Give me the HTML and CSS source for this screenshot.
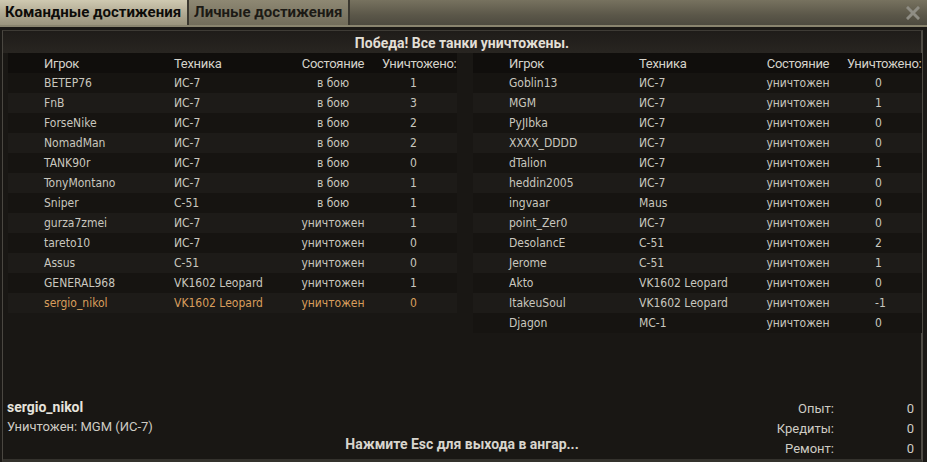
FILE: index.html
```html
<!DOCTYPE html>
<html lang="ru">
<head>
    <meta charset="UTF-8">
    <meta name="viewport" content="width=device-width, initial-scale=1.0">
    <title>Результаты боя</title>
    <link rel="stylesheet" href="styles.css">
</head>
<body>
    <div id="window">
        <div class="tabs">
            <div class="tab active">Командные достижения</div>
            <div class="tab">Личные достижения</div>
            <div class="close">
                <svg width="14" height="14" viewBox="0 0 14 14"><path d="M2 2 L12 12 M12 2 L2 12" stroke="#8f8d84" stroke-width="3" stroke-linecap="square"/></svg>
            </div>
        </div>
        <div class="panel">
            <div class="title">Победа! Все танки уничтожены.</div>
            <div class="teams">
                <div class="team">
                    <div class="row head"><span>Игрок</span><span>Техника</span><span class="st">Состояние</span><span class="kl">Уничтожено:</span></div>
                    <div class="row"><span>BETEP76</span><span>ИС-7</span><span class="st">в бою</span><span class="kl">1</span></div>
                    <div class="row"><span>FnB</span><span>ИС-7</span><span class="st">в бою</span><span class="kl">3</span></div>
                    <div class="row"><span>ForseNike</span><span>ИС-7</span><span class="st">в бою</span><span class="kl">2</span></div>
                    <div class="row"><span>NomadMan</span><span>ИС-7</span><span class="st">в бою</span><span class="kl">2</span></div>
                    <div class="row"><span>TANK90r</span><span>ИС-7</span><span class="st">в бою</span><span class="kl">0</span></div>
                    <div class="row"><span>TonyMontano</span><span>ИС-7</span><span class="st">в бою</span><span class="kl">1</span></div>
                    <div class="row"><span>Sniper</span><span>С-51</span><span class="st">в бою</span><span class="kl">1</span></div>
                    <div class="row"><span>gurza7zmei</span><span>ИС-7</span><span class="st">уничтожен</span><span class="kl">1</span></div>
                    <div class="row"><span>tareto10</span><span>ИС-7</span><span class="st">уничтожен</span><span class="kl">0</span></div>
                    <div class="row"><span>Assus</span><span>С-51</span><span class="st">уничтожен</span><span class="kl">0</span></div>
                    <div class="row"><span>GENERAL968</span><span>VK1602 Leopard</span><span class="st">уничтожен</span><span class="kl">1</span></div>
                    <div class="row me"><span>sergio_nikol</span><span>VK1602 Leopard</span><span class="st">уничтожен</span><span class="kl">0</span></div>
                </div>
                <div class="team">
                    <div class="row head"><span>Игрок</span><span>Техника</span><span class="st">Состояние</span><span class="kl">Уничтожено:</span></div>
                    <div class="row"><span>Goblin13</span><span>ИС-7</span><span class="st">уничтожен</span><span class="kl">0</span></div>
                    <div class="row"><span>MGM</span><span>ИС-7</span><span class="st">уничтожен</span><span class="kl">1</span></div>
                    <div class="row"><span>PyJIbka</span><span>ИС-7</span><span class="st">уничтожен</span><span class="kl">0</span></div>
                    <div class="row"><span>XXXX_DDDD</span><span>ИС-7</span><span class="st">уничтожен</span><span class="kl">0</span></div>
                    <div class="row"><span>dTalion</span><span>ИС-7</span><span class="st">уничтожен</span><span class="kl">1</span></div>
                    <div class="row"><span>heddin2005</span><span>ИС-7</span><span class="st">уничтожен</span><span class="kl">0</span></div>
                    <div class="row"><span>ingvaar</span><span>Maus</span><span class="st">уничтожен</span><span class="kl">0</span></div>
                    <div class="row"><span>point_Zer0</span><span>ИС-7</span><span class="st">уничтожен</span><span class="kl">0</span></div>
                    <div class="row"><span>DesolancE</span><span>С-51</span><span class="st">уничтожен</span><span class="kl">2</span></div>
                    <div class="row"><span>Jerome</span><span>С-51</span><span class="st">уничтожен</span><span class="kl">1</span></div>
                    <div class="row"><span>Akto</span><span>VK1602 Leopard</span><span class="st">уничтожен</span><span class="kl">0</span></div>
                    <div class="row"><span>ItakeuSoul</span><span>VK1602 Leopard</span><span class="st">уничтожен</span><span class="kl">-1</span></div>
                    <div class="row"><span>Djagon</span><span>МС-1</span><span class="st">уничтожен</span><span class="kl">0</span></div>
                </div>
            </div>
            <div class="footer">
                <div class="who">
                    <div class="nick">sergio_nikol</div>
                    <div class="killer">Уничтожен: MGM (ИС-7)</div>
                </div>
                <div class="esc">Нажмите Esc для выхода в ангар...</div>
                <div class="stats">
                    <span class="lbl">Опыт:</span><span class="val">0</span>
                    <span class="lbl">Кредиты:</span><span class="val">0</span>
                    <span class="lbl">Ремонт:</span><span class="val">0</span>
                </div>
            </div>
        </div>
    </div>
</body>
</html>
```

FILE: styles.css
```css
body{
    margin: 0;
    background-color: #14120f;
    overflow: hidden;
}
#window{
    width: 927px;
    height: 462px;
    display: flex;
    flex-direction: column;
    background-color: #1b1916;
}
.tabs{
    height: 25px;
    display: flex;
    align-items: stretch;
    background: linear-gradient(#77725f, #5b5749 60%, #4d4a3f);
    border-bottom: 2px solid #8a856f;
}
.tab{
    padding: 0 6px 0 5px;
    font-family: Roboto, "DejaVu Sans Condensed", sans-serif;
    font-weight: bold;
    font-size: 15px;
    line-height: 25px;
    white-space: nowrap;
    color: #1c1a15;
    background: linear-gradient(#8e8873, #726d5b);
    border-right: 2px solid #3b382f;
}
.tab.active{
    background: linear-gradient(#cfc9b1, #aea790 60%, #9b957e);
    color: #0d0c09;
}
.close{
    margin-left: auto;
    width: 24px;
    display: flex;
    align-items: center;
    justify-content: center;
    padding-right: 2px;
}
.panel{
    flex: 1;
    margin: 3px 4px 0 2px;
    border-left: 1px solid #4a4741;
    border-top: 1px solid #3e3b35;
    border-right: 2px solid #4f4c45;
    border-bottom: 3px solid #34322d;
    background-color: #191714;
    display: flex;
    flex-direction: column;
}
.title{
    height: 22px;
    line-height: 24px;
    text-align: center;
    font-family: Roboto, "DejaVu Sans Condensed", sans-serif;
    font-weight: bold;
    font-size: 14px;
    color: #e2dfd6;
    background: linear-gradient(#1f1c19, #282521);
}
.teams{
    display: grid;
    grid-template-columns: 449px 449px;
    gap: 16px;
    padding-left: 5px;
}
.row{
    height: 20px;
    display: grid;
    grid-template-columns: 130px 110px 98px 1fr;
    padding-left: 36px;
    align-items: center;
    font-family: "DejaVu Sans Condensed", "DejaVu Sans", sans-serif;
    font-size: 12px;
    color: #c9c7bf;
    background-color: #1d1b18;
}
.row:nth-child(even){
    background-color: #161411;
}
.row .st{
    text-align: center;
}
.row .kl{
    padding-left: 28px;
}
.row.head{
    font-family: Roboto, "DejaVu Sans Condensed", sans-serif;
    font-size: 13px;
    letter-spacing: -0.3px;
    color: #d4d2ca;
    background-color: #100e0c;
}
.row.head .kl{
    padding-left: 0;
    white-space: nowrap;
}
.row.me{
    color: #d99e5c;
}
.footer{
    margin-top: auto;
    height: 60px;
    display: grid;
    grid-template-columns: 1fr 1fr 1fr;
    align-items: end;
    font-family: Roboto, "DejaVu Sans Condensed", sans-serif;
    color: #cfccc4;
}
.who{
    align-self: start;
    padding-left: 4px;
    margin-top: -2px;
}
.nick{
    font-weight: bold;
    font-size: 14px;
    color: #e6e3dc;
    line-height: 20px;
}
.killer{
    font-size: 13px;
    line-height: 20px;
}
.esc{
    text-align: center;
    font-weight: bold;
    font-size: 14px;
    color: #d8d5cd;
    padding-bottom: 13px;
    white-space: nowrap;
}
.stats{
    display: grid;
    grid-template-columns: 1fr 80px;
    font-size: 13px;
    line-height: 20px;
    padding-right: 7px;
    padding-bottom: 6px;
}
.stats .lbl{
    text-align: right;
}
.stats .val{
    text-align: right;
}
```
